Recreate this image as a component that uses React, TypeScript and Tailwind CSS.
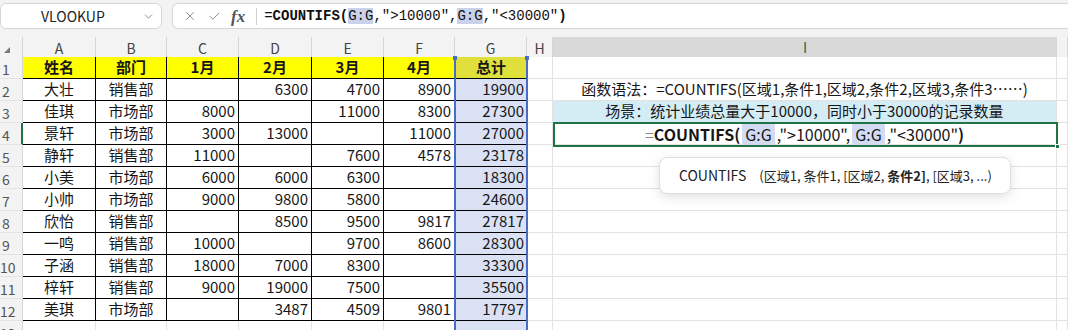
import { X, Check, ChevronDown } from "lucide-react";

const headers = ["A", "B", "C", "D", "E", "F", "G", "H", "I", ""];

// 表格数据：姓名 / 部门 / 1-4月 / 总计
const rows: string[][] = [
  ["姓名", "部门", "1月", "2月", "3月", "4月", "总计"],
  ["大壮", "销售部", "", "6300", "4700", "8900", "19900"],
  ["佳琪", "市场部", "8000", "", "11000", "8300", "27300"],
  ["景轩", "市场部", "3000", "13000", "", "11000", "27000"],
  ["静轩", "销售部", "11000", "", "7600", "4578", "23178"],
  ["小美", "市场部", "6000", "6000", "6300", "", "18300"],
  ["小帅", "市场部", "9000", "9800", "5800", "", "24600"],
  ["欣怡", "销售部", "", "8500", "9500", "9817", "27817"],
  ["一鸣", "销售部", "10000", "", "9700", "8600", "28300"],
  ["子涵", "销售部", "18000", "7000", "8300", "", "33300"],
  ["梓轩", "销售部", "9000", "19000", "7500", "", "35500"],
  ["美琪", "市场部", "", "3487", "4509", "9801", "17797"],
  ["", "", "", "", "", "", ""],
];

const gridCols =
  "grid grid-cols-[23px_73px_71px_72px_73px_72px_71px_72px_26px_504px_11px]";

function cellClass(r: number, c: number) {
  const inTable = r <= 12;
  if (c <= 5) {
    if (!inTable) return "border-r border-b border-[#e2e2e2] bg-white";
    if (r === 1)
      return "border-r border-b border-black bg-[#ffff00] font-bold justify-center";
    return c <= 1
      ? "border-r border-b border-black bg-white justify-center"
      : "border-r border-b border-black bg-white justify-end pr-[3px]";
  }
  if (c === 6) {
    if (!inTable) return "border-b border-[#e2e2e2] bg-[#dae1f4]";
    if (r === 1) return "border-b border-black bg-[#dfe03c] font-bold justify-center";
    return "border-b border-black bg-[#dae1f4] justify-end pr-[3px]";
  }
  if (c === 8 && r === 3)
    return "border-r border-b border-[#e2e2e2] bg-[#d4ecf4] justify-center";
  return "border-r border-b border-[#e2e2e2] bg-white justify-center";
}

function Chip({ children }: { children: React.ReactNode }) {
  return (
    <span className="mx-[2px] rounded-[3px] bg-[#d3dbf3] px-[3px]">{children}</span>
  );
}

function ICell({ r }: { r: number }) {
  if (r === 2)
    return (
      <span className="text-[15px]">
        函数语法：=COUNTIFS(区域1,条件1,区域2,条件2,区域3,条件3……)
      </span>
    );
  if (r === 3)
    return (
      <span className="text-[15px]">
        场景：统计业绩总量大于10000，同时小于30000的记录数量
      </span>
    );
  if (r === 4)
    return (
      <span className="text-[16px]">
        <span className="text-[#888]">=</span>
        <b>COUNTIFS(</b>
        <Chip>G:G</Chip>,"&gt;10000",<Chip>G:G</Chip>,"&lt;30000"<b>)</b>
      </span>
    );
  return null;
}

export default function App() {
  return (
    <div className="relative h-[330px] w-[1068px] overflow-hidden bg-[#f3f3f3] font-['Noto_Sans_CJK_SC',sans-serif] text-[#161616]">
      {/* 名称框 + 编辑栏 */}
      <div className="flex h-[30px] items-start gap-[10px] pt-[3px]">
        <div className="flex h-[26px] w-[162px] items-center rounded-md border border-[#d6d6d6] bg-white pl-[40px] pr-[6px]">
          <span className="flex-1 text-[14px] text-[#222]">VLOOKUP</span>
          <ChevronDown size={13} strokeWidth={1.5} className="text-[#777]" />
        </div>
        <div className="flex h-[26px] flex-1 items-center rounded-l-md border border-r-0 border-[#d6d6d6] bg-white pl-[10px]">
          <X size={14} strokeWidth={1.4} className="text-[#777]" />
          <Check size={13} strokeWidth={1.6} className="ml-[11px] text-[#777]" />
          <span className="ml-[10px] font-['Liberation_Serif',serif] text-[17px] font-bold italic leading-none text-[#555]">
            fx
          </span>
          <div className="ml-[11px] h-[17px] w-px bg-[#cfcfcf]" />
          <span className="ml-[7px] whitespace-pre font-['Liberation_Mono',monospace] text-[14px] text-[#111]">
            =<b>COUNTIFS(</b>
            <span className="bg-[#c9d2ea]">G:G</span>,"&gt;10000",
            <span className="bg-[#c9d2ea]">G:G</span>,"&lt;30000"<b>)</b>
          </span>
        </div>
      </div>

      {/* 列标题 */}
      <div className={`${gridCols} mt-[7px] h-[20px] text-[14px] text-[#444]`}>
        <div className="relative border-r border-[#d6d6d6]">
          <svg width="6" height="6" viewBox="0 0 6 6" className="absolute left-[4px] top-[10px]">
            <polygon points="6,0 6,6 0,6" fill="#7a7a7a" />
          </svg>
        </div>
        {headers.map((h, i) =>
          i === 8 ? (
            <div
              key={i}
              className="flex items-center justify-center border-b-2 border-[#217346] bg-[#d9d9d9] text-[#1d6b47]"
            >
              {h}
            </div>
          ) : (
            <div
              key={i}
              className="flex items-center justify-center border-r border-b border-[#d6d6d6]"
            >
              {h}
            </div>
          )
        )}
      </div>

      {/* 数据区 */}
      <div className={`${gridCols} auto-rows-[22px] text-[15px]`}>
        {rows.map((row, ri) => {
          const r = ri + 1;
          return [
            <div
              key={`h${r}`}
              className={`flex items-start pt-[2px] border-b border-[#e3e3e3] text-[14px] text-[#555] ${
                r === 4 ? "border-r-2 border-r-[#217346]" : "border-r border-r-[#d6d6d6]"
              }`}
            >
              <span className="w-[12px] text-center">{r}</span>
            </div>,
            ...[0, 1, 2, 3, 4, 5, 6, 7, 8, 9].map((c) => (
              <div
                key={`${r}-${c}`}
                className={`flex items-center overflow-visible whitespace-nowrap ${cellClass(r, c)}`}
              >
                {c <= 6 ? row[c] : c === 8 ? <ICell r={r} /> : null}
              </div>
            )),
          ];
        })}
      </div>

      {/* G:G 引用框 */}
      <div className="absolute left-[454px] top-[57px] h-[280px] w-[74px] border-x-2 border-[#4a6cc2]" />
      <div className="absolute left-[453px] top-[56px] h-[4px] w-[4px] bg-[#4a6cc2]" />
      <div className="absolute left-[525px] top-[56px] h-[4px] w-[4px] bg-[#4a6cc2]" />

      {/* I4 活动单元格 */}
      <div className="absolute left-[553px] top-[122px] h-[25px] w-[505px] border-2 border-[#217346]" />
      <div className="absolute left-[1055px] top-[144px] h-[5px] w-[5px] border border-white bg-[#217346]" />

      {/* 函数提示 */}
      <div className="absolute left-[659px] top-[157px] flex h-[37px] w-[352px] items-center rounded-lg border border-[#dedede] bg-white pl-[19px] text-[14px] text-[#222] shadow-[0_3px_12px_rgba(0,0,0,0.12)]">
        <span>COUNTIFS</span>
        <span className="ml-[13px] text-[13px]">
          (区域1, 条件1, [区域2, <b>条件2]</b>, [区域3, ...)
        </span>
      </div>
    </div>
  );
}
